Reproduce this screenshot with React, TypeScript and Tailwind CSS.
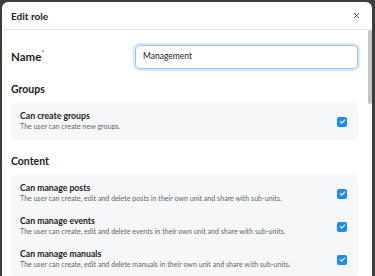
import { X } from "lucide-react";

const contentPerms = [
  {
    title: "Can manage posts",
    desc: "The user can create, edit and delete posts in their own unit and share with sub-units.",
  },
  {
    title: "Can manage events",
    desc: "The user can create, edit and delete events in their own unit and share with sub-units.",
  },
  {
    title: "Can manage manuals",
    desc: "The user can create, edit and delete manuals in their own unit and share with sub-units.",
  },
];

function Checkbox() {
  return (
    <div className="w-[10px] h-[10px] rounded-[2px] bg-[#1a8cff] flex items-center justify-center shrink-0">
      <svg width="7" height="7" viewBox="0 0 8 8" fill="none">
        <path d="M1.5 4.2 L3.2 5.8 L6.6 2.2" stroke="white" strokeWidth="1.2" strokeLinecap="round" strokeLinejoin="round" />
      </svg>
    </div>
  );
}

function PermRow({ title, desc }: { title: string; desc: string }) {
  return (
    <div className="flex items-center justify-between">
      <div>
        <div className="text-[8.7px] leading-[11px] font-bold text-[#222]">{title}</div>
        <div className="text-[7.1px] leading-[12px] text-[#666]">{desc}</div>
      </div>
      <div className="pr-[2px]">
        <Checkbox />
      </div>
    </div>
  );
}

export default function App() {
  return (
    <div className="w-[375px] h-[276px] bg-[#3d3d3d] pt-[2px] pl-[2px] pr-[3px] overflow-hidden font-['Lato',sans-serif]">
      <div className="bg-white rounded-t-[6px] h-[300px] flex flex-col">
        <div className="h-[28px] flex items-center justify-between pl-[9px] pr-[11px] border-b border-[#e8e8e8]">
          <span className="text-[10px] leading-[12px] mt-[1px] font-bold text-[#222]">Edit role</span>
          <X size={9} strokeWidth={2.2} className="text-[#333]" />
        </div>
        <div className="flex flex-1">
          <div className="flex-1 pl-[9px] pr-[10px] pt-[14px]">
            <div className="flex items-center h-[25px]">
              <div className="w-[124px] text-[11.5px] font-bold text-[#222]">
                Name<span className="text-[#1a8cff] text-[7px] align-top">*</span>
              </div>
              <div className="flex-1 h-[24px] rounded-[5px] border border-[#9cc4ee] ring-2 ring-[#d6e8fb] flex items-center pl-[7px] text-[8.5px] text-[#222]">
                Management
              </div>
            </div>
            <div className="mt-[14px] text-[10.5px] leading-[13px] font-bold text-[#222]">Groups</div>
            <div className="mt-[6px] bg-[#f6f7f9] rounded-[6px] pl-[9px] pr-[9px] pt-[8px] pb-[7px]">
              <PermRow title="Can create groups" desc="The user can create new groups." />
            </div>
            <div className="mt-[15px] text-[10.5px] leading-[13px] font-bold text-[#222]">Content</div>
            <div className="mt-[6px] bg-[#f6f7f9] rounded-[6px] pl-[9px] pr-[9px] pt-[8px] pb-[7px] flex flex-col gap-[10px]">
              {contentPerms.map((p) => (
                <PermRow key={p.title} title={p.title} desc={p.desc} />
              ))}
            </div>
          </div>
          <div className="w-[4px]">
            <div className="h-[74px] bg-[#c4c4c4] rounded-[2px]" />
          </div>
        </div>
      </div>
    </div>
  );
}
